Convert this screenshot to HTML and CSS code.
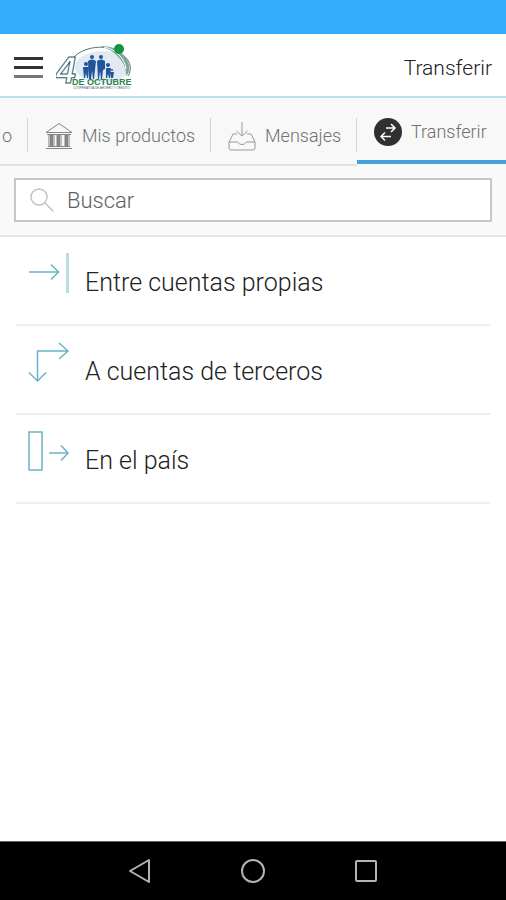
FILE: index.html
```html
<!DOCTYPE html>
<html lang="es">
<head>
<meta charset="utf-8">
<meta name="viewport" content="width=device-width, initial-scale=1">
<title>Transferir</title>
<link rel="stylesheet" href="styles.css">
</head>
<body>
<div class="status"></div>
<header class="header">
  <button class="menu" aria-label="Menú"><span></span><span></span><span></span></button>
  <svg class="logo" width="76" height="48" viewBox="0 0 76 48" role="img" aria-label="4 de Octubre">
    <ellipse cx="46" cy="24" rx="27" ry="16" fill="#e3e9f1"/>
    <path d="M17 15C28 3 50 1 63 9c11 7 14 16 9 24" fill="none" stroke="#52776f" stroke-width="1"/>
    <path d="M44 3c14-1 27 8 29 19 1 5 0 8-3 11 1-12-9-25-26-30z" fill="#7fa69b"/>
    <path d="M48 4c12 2 21 12 22 22" fill="none" stroke="#fff" stroke-width="1"/>
    <circle cx="63" cy="6" r="5" fill="#129343"/>
    <g fill="#20559c">
      <circle cx="36" cy="14" r="2"/><path d="M32 18q4-3 8 0l-1 9-1 9h-1l-1-8-1 8h-2z"/>
      <circle cx="45" cy="14" r="2"/><path d="M41 18q4-3 8 0v8l-2 1-1 9h-1l-1-8-1 8h-1z"/>
      <circle cx="30" cy="21" r="2"/><path d="M27 24h6l-1 11h-1l-1-5-1 5h-1z"/>
      <circle cx="52" cy="22" r="2"/><path d="M50 25h5l-1 10h-1l-1-4-1 4h-1z"/>
      <circle cx="56" cy="27" r="1"/><path d="M54 29h4l-1 6h-2z"/>
    </g>
    <text class="logo-four" x="0" y="40">4</text>
    <text class="logo-name" x="16" y="42">DE OCTUBRE</text>
    <text class="logo-sub" x="17" y="46">COOPERATIVA DE AHORRO Y CREDITO</text>
  </svg>
  <h1 class="title">Transferir</h1>
</header>
<nav class="tabs">
  <a class="tab tab-cut" href="#">o</a>
  <a class="tab tab-products" href="#">
    <svg width="28" height="28" viewBox="0 0 28 28" fill="none" stroke="#858585" stroke-width="1">
      <path d="M1 10.5L14 1.500l13 9zM2 12.500h24M3 24.500h22M1 26.500h26"/>
      <path d="M5.500 13v11M7.500 13v11M14.500 13v11M12.500 13v11M20.500 13v11M22.500 13v11" stroke-width="2"/>
      <path d="M3.500 13v11M9.500 13v11M16.500 13v11M24.500 13v11" stroke="#bbb"/>
    </svg>
    Mis productos</a>
  <a class="tab tab-messages" href="#">
    <svg width="30" height="30" viewBox="0 0 30 30" fill="none" stroke="#999" stroke-width="1">
      <path d="M15 1v14M9.500 10l5.500 5 5.500-5M10 13H6l-4 8v6q0 2 2 2h22q2 0 2-2v-6l-4-8h-4M2 21h8q1 0 2 1.500 1 1 3 1t3-1Q19 21 20 21h8"/>
    </svg>
    Mensajes</a>
  <a class="tab tab-transfer" href="#" aria-current="page">
    <svg width="28" height="28" viewBox="0 0 28 28" fill="none" stroke="#fff" stroke-width="1.500">
      <circle cx="14" cy="14" r="14" fill="#303033" stroke="none"/>
      <path d="M12 10h9M17 6l4 4-4 4M17 18.500H7M11 14.500l-4 4 4 4"/>
    </svg>
    Transferir</a>
</nav>
<form class="search">
  <label class="field">
    <svg width="26" height="26" viewBox="0 0 26 26" fill="none" stroke="#c2c2c2" stroke-width="1.500"><circle cx="9" cy="10" r="8"/><path d="M14.500 15.500l9 9"/></svg>
    <input type="search" placeholder="Buscar" aria-label="Buscar">
  </label>
</form>
<main class="list">
  <a class="row" href="#">
    <svg width="42" height="42" viewBox="0 0 42 42" fill="none" stroke="#6bb3c6" stroke-width="1.500">
      <path d="M1 19h29M23 11.500l7.500 7.500-7.500 7.500"/><path d="M39.500 0v40" stroke="#b9dce5" stroke-width="3"/>
    </svg>
    <span>Entre cuentas propias</span></a>
  <a class="row" href="#">
    <svg width="42" height="42" viewBox="0 0 42 42" fill="none" stroke="#6bb3c6" stroke-width="1.500">
      <path d="M40 9H9.500v30M31 1l9 8-9 8M1 30.500l8.500 8.500 8.500-8.500"/>
    </svg>
    <span>A cuentas de terceros</span></a>
  <a class="row" href="#">
    <svg width="42" height="42" viewBox="0 0 42 42" fill="none" stroke="#6bb3c6" stroke-width="1.500">
      <path d="M1 1h13v38H1zM21 22h19M33 14.500l7 7.500-7 7.500"/>
    </svg>
    <span>En el país</span></a>
</main>
<footer class="system">
  <button aria-label="Atrás"><svg width="24" height="26" viewBox="0 0 24 26" fill="none" stroke="#b4b4b4" stroke-width="2"><path d="M21 2v22L2 13z" stroke-linejoin="round"/></svg></button>
  <button aria-label="Inicio"><svg width="26" height="26" viewBox="0 0 26 26" fill="none" stroke="#b4b4b4" stroke-width="2"><circle cx="13" cy="13" r="11"/></svg></button>
  <button aria-label="Recientes"><svg width="24" height="26" viewBox="0 0 24 26" fill="none" stroke="#b4b4b4" stroke-width="2"><rect x="2" y="3" width="20" height="20" rx="1"/></svg></button>
</footer>
</body>
</html>
```
FILE: styles.css
```css
* { box-sizing: border-box; }
body {
  margin: 0;
  min-height: 100vh;
  display: flex;
  flex-direction: column;
  background: #fff;
  color: #222;
  font-family: Roboto, "Liberation Sans", sans-serif;
}
a { color: inherit; text-decoration: none; }
button { border: 0; padding: 0; background: none; }
svg { display: block; flex: none; }
.status { height: 34px; background: #31adfc; }
.header {
  height: 64px;
  display: flex;
  align-items: center;
  padding: 4px 14px 0;
  border-bottom: 2px solid #b9e1e8;
}
.menu { display: grid; gap: 6px; width: 29px; margin-right: 13px; }
.menu span { height: 3px; background: #333; }
.menu span:last-child { background: #777; }
.logo-four { font: italic 700 36px "Liberation Sans", sans-serif; fill: #fff; stroke: #2f6268; stroke-width: 1; }
.logo-name { font: 700 9px "Liberation Sans", sans-serif; fill: #23854a; }
.logo-sub { font: 3px "Liberation Sans", sans-serif; fill: #40606a; }
.title { margin: 0 0 0 auto; padding-top: 2px; font-size: 21px; font-weight: 300; line-height: 24px; }
.tabs {
  display: grid;
  grid-template-columns: 28fr 183fr 146fr 149fr;
  height: 68px;
  background: #f8f8f8;
  color: #707070;
  font-size: 18px;
  font-weight: 300;
  line-height: 24px;
  white-space: nowrap;
}
.tab { display: flex; align-items: center; min-width: 0; padding-top: 10px; border-bottom: 2px solid #e2e2e2; background: linear-gradient(#d4d4d4, #d4d4d4) no-repeat right 20px / 1px 34px; }
.tab-cut { padding-left: 2px; }
.tab-products { padding-left: 17px; gap: 9px; }
.tab-messages { padding-left: 16px; gap: 8px; }
.tab-transfer { padding: 6px 0 0 17px; gap: 9px; border-bottom: 4px solid #459fd8; margin-bottom: 2px; background: none; }
.search { padding: 12px 14px 13px; background: #f9f9f9; border-bottom: 2px solid #e7e7e7; }
.field {
  display: flex;
  align-items: center;
  gap: 11px;
  height: 44px;
  padding: 0 14px;
  background: #fff;
  border: 2px solid #c6c8c8;
}
.field input { flex: 1; min-width: 0; border: 0; padding: 2px 0 0; outline: 0; background: none; font: 300 22px/28px Roboto, sans-serif; }
.field input::placeholder { color: #606060; opacity: 1; }
.list { flex: 1; padding: 0 16px; }
.row { display: flex; gap: 15px; height: 89px; padding: 16px 0 0 12px; border-bottom: 2px solid #efefef; }
.row span { padding-top: 14px; font-size: 25px; font-weight: 300; line-height: 32px; }
.system { height: 59px; display: flex; justify-content: center; align-items: center; gap: 88px; background: #000; border-top: 1px solid #666; }
```
